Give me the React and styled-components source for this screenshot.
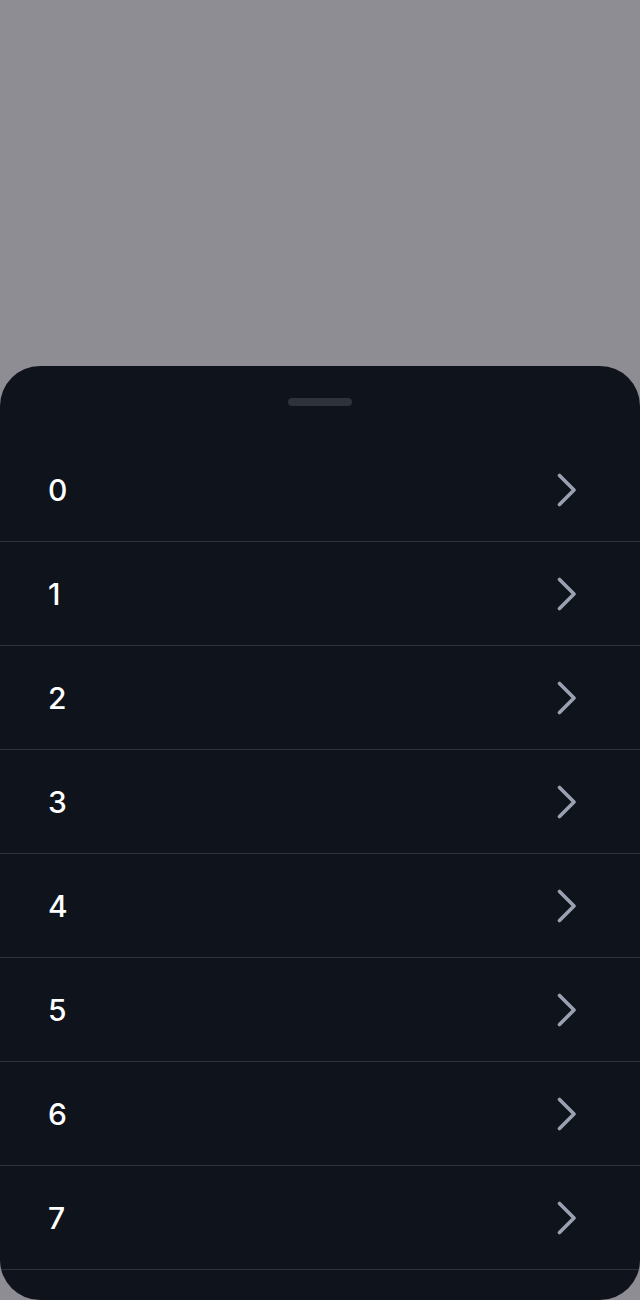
import React from "react";
import styled, { createGlobalStyle } from "styled-components";

const Global = createGlobalStyle`
  html, body { margin: 0; padding: 0; background: #8e8d93; }
  body { font-family: Inter, "Noto Sans", sans-serif; }
`;

const Backdrop = styled.div`
  width: 640px;
  height: 1300px;
  display: flex;
  flex-direction: column;
  justify-content: flex-end;
  background: #8e8d93;
  overflow: hidden;
`;

const Sheet = styled.div`
  height: 934px;
  background: #0f131b;
  border-radius: 40px;
  overflow: hidden;
  display: flex;
  flex-direction: column;
  align-items: stretch;
  padding-top: 32px;
  box-sizing: border-box;
`;

const Handle = styled.div`
  align-self: center;
  width: 64px;
  height: 8px;
  border-radius: 4px;
  background: #2e323b;
  margin-bottom: 32px;
  flex-shrink: 0;
`;

const List = styled.ul`
  list-style: none;
  margin: 0;
  padding: 0;
`;

const Row = styled.li`
  height: 103px;
  border-bottom: 1px solid #2e323b;
  display: flex;
  align-items: center;
  justify-content: space-between;
  padding: 0 63px 0 48px;
`;

const Label = styled.span`
  color: #ffffff;
  font-size: 30px;
  font-weight: 500;
`;

const Chevron = () => (
  <svg width="20" height="34" viewBox="0 0 20 34" fill="none">
    <path
      d="M2.5 2.5 L17 17 L2.5 31.5"
      stroke="#9aa1b2"
      strokeWidth="3.6"
      strokeLinecap="round"
      strokeLinejoin="round"
    />
  </svg>
);

export default function App() {
  const items = [0, 1, 2, 3, 4, 5, 6, 7];
  return (
    <>
      <Global />
      <Backdrop>
        <Sheet>
          <Handle />
          <List>
            {items.map((i) => (
              <Row key={i}>
                <Label>{i}</Label>
                <Chevron />
              </Row>
            ))}
          </List>
        </Sheet>
      </Backdrop>
    </>
  );
}
